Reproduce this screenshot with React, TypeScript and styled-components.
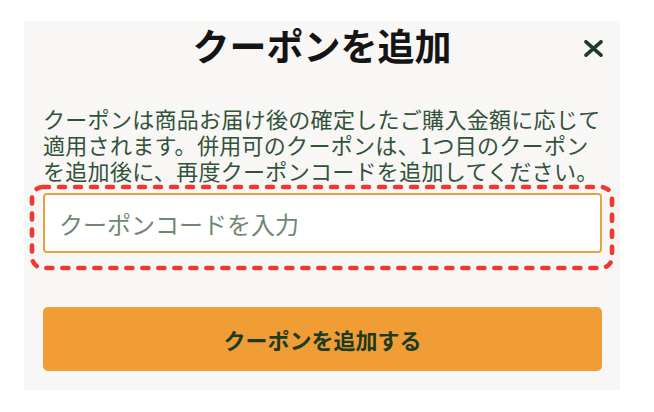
import React from 'react'
import styled, { createGlobalStyle } from 'styled-components'

const GlobalStyle = createGlobalStyle`
    body {
        margin: 0;
        background: #ffffff;
        font-family: "Noto Sans CJK JP", "Noto Sans", sans-serif;
    }
`

const Panel = styled.div({
    marginLeft: '24px',
    marginTop: '21px',
    width: '596px',
    height: '369px',
    boxSizing: 'border-box',
    background: '#f8f7f5',
    padding: '0 18px 19px 19px',
    display: 'flex',
    flexDirection: 'column',
})

const Header = styled.div({
    display: 'grid',
    gridTemplateColumns: '1fr auto 1fr',
    alignItems: 'center',
    height: '48px',
    margin: '0 -18px 0 -19px',
})

const Title = styled.h1({
    gridColumn: 2,
    margin: 0,
    fontSize: '37px',
    lineHeight: '48px',
    fontWeight: 700,
    color: '#141414',
    whiteSpace: 'nowrap',
})

const CloseButton = styled.button({
    gridColumn: 3,
    justifySelf: 'end',
    marginRight: '17px',
    marginTop: '6px',
    padding: 0,
    border: 'none',
    background: 'transparent',
    display: 'flex',
    cursor: 'pointer',
})

const Notice = styled.p({
    margin: '36px 0 0',
    fontSize: '22px',
    lineHeight: '26px',
    letterSpacing: '0.3px',
    color: '#32523a',
})

const Line = styled.span({
    display: 'block',
    whiteSpace: 'nowrap',
})

const Highlight = styled.div({
    position: 'relative',
    margin: '2px -12px 0 -13px',
    padding: '8px 12px 17px 13px',
})

const Ring = styled.svg({
    position: 'absolute',
    inset: 0,
    width: '100%',
    height: '100%',
    overflow: 'visible',
    pointerEvents: 'none',
})

const CodeInput = styled.input`
    display: block;
    width: 100%;
    height: 60px;
    box-sizing: border-box;
    border: 2px solid #e6a43c;
    border-radius: 4px;
    background: #ffffff;
    padding: 0 14px;
    font-family: "Noto Sans CJK JP", "Noto Sans", sans-serif;
    font-size: 24px;
    color: #2f4f35;
    outline: none;
    &::placeholder {
        color: #718673;
    }
`

const SubmitButton = styled.button({
    marginTop: '37px',
    height: '64px',
    width: '100%',
    border: 'none',
    borderRadius: '5px',
    background: '#f09d36',
    fontFamily: '"Noto Sans CJK JP", "Noto Sans", sans-serif',
    fontSize: '22px',
    fontWeight: 700,
    color: '#1d3b1f',
    cursor: 'pointer',
})

const CloseIcon = () => (
    <svg width="19" height="17" viewBox="0 0 19 17">
        <path d="M2 1.8 L17 15.2 M17 1.8 L2 15.2" stroke="#1f3d26" strokeWidth="3.6" strokeLinecap="round" fill="none" />
    </svg>
)

export default function App() {
    return (
        <>
            <GlobalStyle />
            <Panel>
                <Header>
                    <Title>クーポンを追加</Title>
                    <CloseButton aria-label="閉じる">
                        <CloseIcon />
                    </CloseButton>
                </Header>
                <Notice>
                    <Line>クーポンは商品お届け後の確定したご購入金額に応じて</Line>
                    <Line>適用されます。併用可のクーポンは、1つ目のクーポン</Line>
                    <Line>を追加後に、再度クーポンコードを追加してください。</Line>
                </Notice>
                <Highlight>
                    <Ring>
                        <rect
                            x="2"
                            y="2"
                            width="calc(100% - 4px)"
                            height="calc(100% - 4px)"
                            rx="11"
                            fill="none"
                            stroke="#ec3a31"
                            strokeWidth="4.6"
                            strokeDasharray="6 10"
                            strokeLinecap="round"
                        />
                    </Ring>
                    <CodeInput placeholder="クーポンコードを入力" />
                </Highlight>
                <SubmitButton>クーポンを追加する</SubmitButton>
            </Panel>
        </>
    )
}
